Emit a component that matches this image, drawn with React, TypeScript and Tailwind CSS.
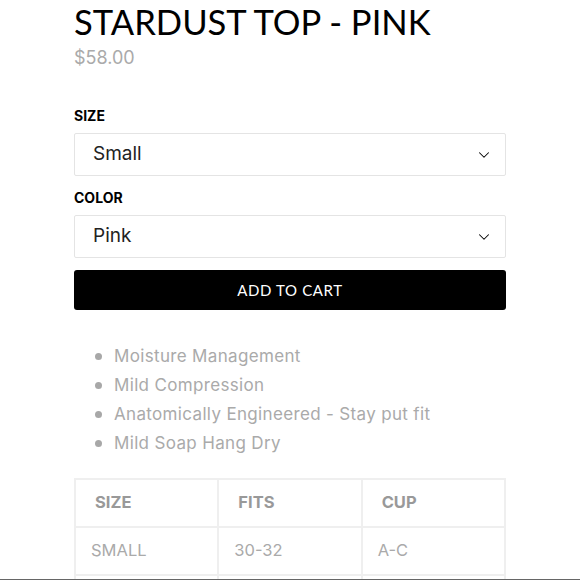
import { ChevronDown } from "lucide-react";

const body = { fontFamily: "Inter, 'Noto Sans', sans-serif" };

const bullets = [
  "Moisture Management",
  "Mild Compression",
  "Anatomically Engineered - Stay put fit",
  "Mild Soap Hang Dry",
];

function Select({ label, value }: { label: string; value: string }) {
  return (
    <div>
      <div className="text-[14px] font-bold leading-[20px] text-black">{label}</div>
      <div className="mt-[7px] flex h-[43px] items-center justify-between rounded-[2px] border border-[#e4e4e4] pl-[18px] pr-[12px]">
        <span className="text-[19px] text-[#222]">{value}</span>
        <ChevronDown size={18} strokeWidth={1.4} className="text-black" />
      </div>
    </div>
  );
}

export default function App() {
  return (
    <div className="relative h-[580px] w-[580px] overflow-hidden bg-white" style={body}>
      <div className="ml-[74px] w-[432px]">
        <h1
          className="pt-[2px] text-[34.6px] leading-[40px] font-normal text-black"
          style={{ fontFamily: "Lato, sans-serif" }}
        >
          STARDUST TOP - PINK
        </h1>
        <div className="mt-[4px] text-[18px] leading-[24px] text-[#aaa]">$58.00</div>

        <div className="mt-[36px] grid gap-[12px]">
          <Select label="SIZE" value="Small" />
          <Select label="COLOR" value="Pink" />
        </div>

        <button
          className="mt-[12px] flex h-[40px] w-full items-center justify-center rounded-[3px] bg-black text-[15px] tracking-[0.04em] text-white"
          style={{ fontFamily: "Lato, sans-serif" }}
        >
          ADD TO CART
        </button>

        <ul className="mt-[36px] grid gap-[7.5px] pl-[21px]">
          {bullets.map((b) => (
            <li
              key={b}
              className="flex items-center gap-[12px] text-[17px] leading-[21.5px] tracking-[0.02em] text-[#aaa]"
            >
              <span className="h-[7px] w-[7px] rounded-full bg-[#a8a8a8]" />
              {b}
            </li>
          ))}
        </ul>

        <table className="mt-[23px] w-full table-fixed border-collapse text-[16.5px]">
          <thead>
            <tr className="h-[48px]">
              {["SIZE", "FITS", "CUP"].map((h) => (
                <th key={h} className="border-2 border-[#efefef] pl-[19px] text-left font-bold text-[#999]">
                  {h}
                </th>
              ))}
            </tr>
          </thead>
          <tbody>
            <tr className="h-[48px]">
              {["SMALL", "30-32", "A-C"].map((c) => (
                <td key={c} className="border-2 border-[#efefef] pl-[15px] text-[#aaa]">
                  {c}
                </td>
              ))}
            </tr>
            <tr className="h-[48px]">
              {["s", "m", "l"].map((k) => (
                <td key={k} className="border-2 border-[#efefef]" />
              ))}
            </tr>
          </tbody>
        </table>
      </div>
      <div className="absolute bottom-0 left-0 h-[1px] w-full bg-[#666]" />
    </div>
  );
}
